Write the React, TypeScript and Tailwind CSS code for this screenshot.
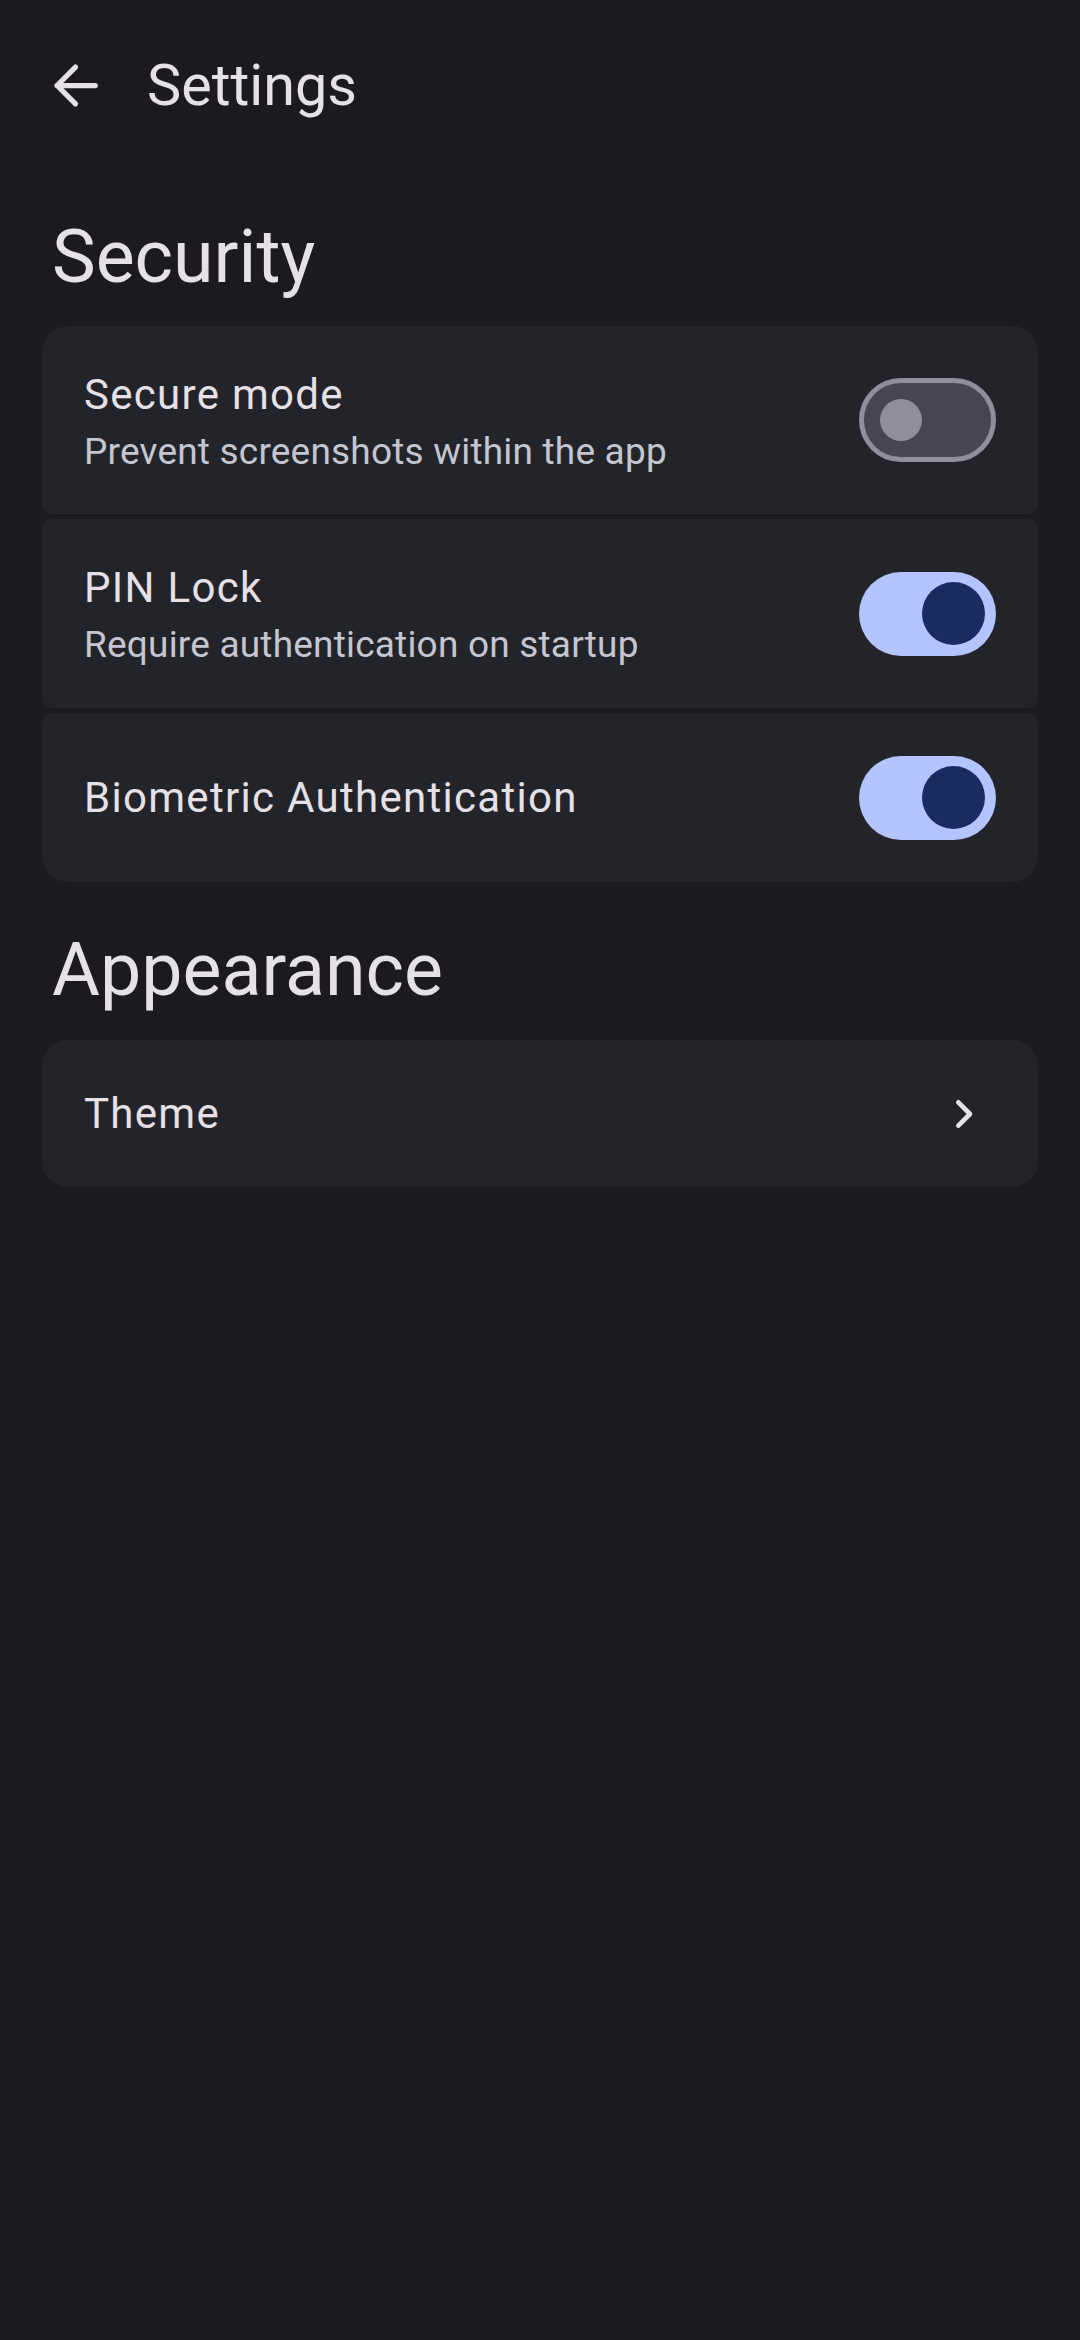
import type { ReactNode } from "react";

function BackIcon() {
  return (
    <svg viewBox="0 0 24 24" className="h-[63px] w-[63px]" fill="none" stroke="#e5e1e6" strokeWidth={2} strokeLinecap="round" strokeLinejoin="round">
      <path d="M19.5 12H5" />
      <path d="M12 5l-7 7 7 7" />
    </svg>
  );
}

function ChevronIcon() {
  return (
    <svg viewBox="0 0 24 24" className="h-[56px] w-[56px]" fill="none" stroke="#e5e1e6" strokeWidth={2} strokeLinecap="round" strokeLinejoin="round">
      <path d="M10 7l5 5-5 5" />
    </svg>
  );
}

function Toggle({ on }: { on: boolean }) {
  if (on) {
    return (
      <div className="flex h-[84px] w-[137px] shrink-0 items-center justify-end rounded-full bg-[#b3c5ff] pr-[11px]">
        <div className="h-[63px] w-[63px] rounded-full bg-[#182c61]" />
      </div>
    );
  }
  return (
    <div className="flex h-[84px] w-[137px] shrink-0 items-center rounded-full border-[5px] border-[#8f8f99] bg-[#46464f] pl-[16px]">
      <div className="h-[42px] w-[42px] rounded-full bg-[#8f8f99]" />
    </div>
  );
}

function Row({
  title,
  subtitle,
  trailing,
  className,
}: {
  title: string;
  subtitle?: string;
  trailing: ReactNode;
  className: string;
}) {
  return (
    <div className={`flex items-center justify-between bg-[#232429] pl-[42px] pr-[42px] ${className}`}>
      <div className="flex flex-col">
        <span className="text-[42px] leading-[63px] tracking-[1.3px] text-[#e5e1e6]">{title}</span>
        {subtitle && (
          <span className="text-[37px] leading-[52px] tracking-[0.2px] text-[#c5c6d0]">{subtitle}</span>
        )}
      </div>
      {trailing}
    </div>
  );
}

export default function App() {
  return (
    <div className="min-h-[2340px] w-[1080px] bg-[#1b1b1f] pt-[54px] font-['Roboto',sans-serif]">
      <header className="flex h-[63px] items-center pl-[44px]">
        <BackIcon />
        <h1 className="ml-[40px] text-[57.5px] leading-[56px] text-[#e5e1e6]">Settings</h1>
      </header>

      <h2 className="mt-[103px] pl-[52px] text-[73.5px] leading-[75px] text-[#e5e1e6]">Security</h2>
      <div className="mx-[42px] mt-[31px] flex flex-col gap-[5px]">
        <Row
          title="Secure mode"
          subtitle="Prevent screenshots within the app"
          trailing={<Toggle on={false} />}
          className="h-[188px] rounded-t-[26px] rounded-b-[10px]"
        />
        <Row
          title="PIN Lock"
          subtitle="Require authentication on startup"
          trailing={<Toggle on />}
          className="h-[189px] rounded-[10px]"
        />
        <Row
          title="Biometric Authentication"
          trailing={<Toggle on />}
          className="h-[169px] rounded-t-[10px] rounded-b-[26px]"
        />
      </div>

      <h2 className="mt-[51px] pl-[52px] text-[73.5px] leading-[75px] text-[#e5e1e6]">Appearance</h2>
      <div className="mx-[42px] mt-[32px]">
        <div className="flex h-[147px] items-center justify-between rounded-[26px] bg-[#232429] pl-[42px] pr-[47px]">
          <span className="text-[42px] leading-[63px] tracking-[1.3px] text-[#e5e1e6]">Theme</span>
          <ChevronIcon />
        </div>
      </div>
    </div>
  );
}
